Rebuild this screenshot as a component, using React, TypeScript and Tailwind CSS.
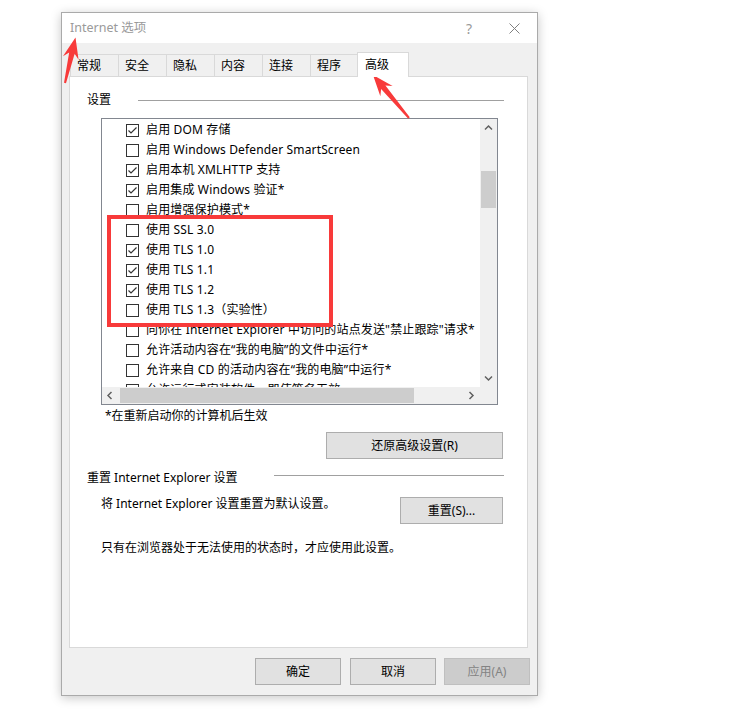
import React from 'react'

const rows: [boolean, string][] = [
  [true, '启用 DOM 存储'],
  [false, '启用 Windows Defender SmartScreen'],
  [true, '启用本机 XMLHTTP 支持'],
  [true, '启用集成 Windows 验证*'],
  [false, '启用增强保护模式*'],
  [false, '使用 SSL 3.0'],
  [true, '使用 TLS 1.0'],
  [true, '使用 TLS 1.1'],
  [true, '使用 TLS 1.2'],
  [false, '使用 TLS 1.3（实验性）'],
  [false, '向你在 Internet Explorer 中访问的站点发送"禁止跟踪"请求*'],
  [false, '允许活动内容在“我的电脑”的文件中运行*'],
  [false, '允许来自 CD 的活动内容在“我的电脑”中运行*'],
  [false, '允许运行或安装软件，即使签名无效'],
]

const tabs = ['常规', '安全', '隐私', '内容', '连接', '程序']

function CheckBox({ on }: { on: boolean }) {
  return (
    <span className="w-[13px] h-[13px] shrink-0 border border-[#333333] bg-white flex items-center justify-center">
      {on && (
        <svg width="11" height="11" viewBox="0 0 11 11">
          <path d="M1.5 5.5 L4 8 L9.5 2.5" fill="none" stroke="#333333" strokeWidth="1.2" />
        </svg>
      )}
    </span>
  )
}

function Chevron({ dir }: { dir: 'up' | 'down' | 'left' | 'right' }) {
  const d = {
    up: 'M1 5.5 L4.5 2 L8 5.5',
    down: 'M1 2.5 L4.5 6 L8 2.5',
    left: 'M5.5 1 L2 4.5 L5.5 8',
    right: 'M2.5 1 L6 4.5 L2.5 8',
  }[dir]
  return (
    <svg width="9" height="9" viewBox="0 0 9 9">
      <path d={d} fill="none" stroke="#606060" strokeWidth="1.5" />
    </svg>
  )
}

function Button({ label, className, disabled }: { label: string; className?: string; disabled?: boolean }) {
  return (
    <div
      className={
        'h-[27px] flex items-center justify-center border ' +
        (disabled ? 'bg-[#cccccc] border-[#bfbfbf] text-[#838383] ' : 'bg-[#e1e1e1] border-[#adadad] ') +
        (className ?? '')
      }
    >
      {label}
    </div>
  )
}

// tapered annotation arrow, tail -> tip
function arrowPoints(tx: number, ty: number, hx: number, hy: number) {
  const headLen = 21
  const headW = 8
  const neckW = 2.8
  const tailW = 1
  const dx = hx - tx
  const dy = hy - ty
  const len = Math.hypot(dx, dy)
  const ux = dx / len
  const uy = dy / len
  const px = -uy
  const py = ux
  const bx = hx - ux * headLen
  const by = hy - uy * headLen
  const nx = hx - ux * (headLen - 5)
  const ny = hy - uy * (headLen - 5)
  const pts = [
    [tx + px * tailW, ty + py * tailW],
    [nx + px * neckW, ny + py * neckW],
    [bx + px * headW, by + py * headW],
    [hx, hy],
    [bx - px * headW, by - py * headW],
    [nx - px * neckW, ny - py * neckW],
    [tx - px * tailW, ty - py * tailW],
  ]
  return pts.map((p) => p.join(',')).join(' ')
}

export default function App() {
  return (
    <div className="relative w-[744px] h-[728px] overflow-hidden bg-white pt-[12px] pl-[61px] text-[12px] text-black font-['Noto_Sans','Noto_Sans_CJK_SC',sans-serif]">
      {/* dialog window */}
      <div className="w-[477px] h-[684px] border border-[#aaaaaa] bg-[#f0f0f0] shadow-[0_2px_10px_rgba(0,0,0,0.22)] flex flex-col">
        {/* title bar */}
        <div className="h-[30px] bg-white flex items-center pl-[8px]">
          <span className="flex-1 text-[#9a9a9a] text-[12.5px]">Internet 选项</span>
          <span className="w-[46px] flex justify-center text-[#9a9a9a] text-[14px]">?</span>
          <span className="w-[45px] flex justify-center">
            <svg width="11" height="11" viewBox="0 0 11 11">
              <path d="M0.5 0.5 L10.5 10.5 M10.5 0.5 L0.5 10.5" stroke="#808080" strokeWidth="1" />
            </svg>
          </span>
        </div>

        <div className="flex-1 flex flex-col pt-[9px]">
          {/* tabs */}
          <div className="flex items-end ml-[8px]">
            {tabs.map((t) => (
              <div
                key={t}
                className="w-[48px] h-[22px] border-t border-l border-[#d9d9d9] bg-[#f0f0f0] flex items-center pl-[6px]"
              >
                {t}
              </div>
            ))}
            <div className="relative z-10 -ml-px -mb-px w-[52px] h-[25px] border-t border-l border-r border-[#d9d9d9] bg-white flex items-center pl-[7px]">
              高级
            </div>
          </div>

          {/* tab panel */}
          <div className="ml-[7px] w-[459px] h-[572px] border border-[#d9d9d9] bg-white flex flex-col">
            <div className="mt-[15px] h-[16px] flex items-center pl-[17px]">
              <span>设置</span>
              <span className="ml-auto mr-[23px] w-[366px] h-px bg-[#a0a0a0]" />
            </div>

            {/* settings list */}
            <div className="mt-[10px] ml-[31px] w-[397px] h-[287px] border border-[#828790] flex flex-col">
              <div className="flex h-[268px]">
                <div className="w-[378px] h-[268px] overflow-hidden pt-px">
                  {rows.map(([on, label], i) => (
                    <div key={i} className="h-[20px] flex items-center whitespace-nowrap pl-[24px]">
                      <CheckBox on={on} />
                      <span className="ml-[7px] tracking-[0.15px]">{label}</span>
                    </div>
                  ))}
                </div>
                <div className="w-[17px] bg-[#f0f0f0] flex flex-col">
                  <div className="h-[17px] flex items-center justify-center pt-[2px]">
                    <Chevron dir="up" />
                  </div>
                  <div className="flex-1">
                    <div className="mt-[35px] mx-px h-[37px] bg-[#cdcdcd]" />
                  </div>
                  <div className="h-[17px] flex items-center justify-center">
                    <Chevron dir="down" />
                  </div>
                </div>
              </div>
              <div className="flex h-[17px]">
                <div className="w-[378px] bg-[#f0f0f0] flex items-center">
                  <div className="w-[17px] h-[17px] flex items-center justify-center">
                    <Chevron dir="left" />
                  </div>
                  <div className="ml-px w-[294px] h-[15px] bg-[#cdcdcd]" />
                  <div className="ml-auto w-[17px] h-[17px] flex items-center justify-center">
                    <Chevron dir="right" />
                  </div>
                </div>
                <div className="w-[17px] bg-[#f0f0f0]" />
              </div>
            </div>

            <div className="mt-[3px] ml-[35px] leading-[16px]">*在重新启动你的计算机后生效</div>

            <Button label="还原高级设置(R)" className="mt-[8px] ml-[256px] w-[177px]" />

            <div className="mt-[11px] h-[16px] flex items-center pl-[17px]">
              <span>重置 Internet Explorer 设置</span>
              <span className="ml-auto mr-[23px] w-[230px] h-px bg-[#a0a0a0] self-start mt-[5px]" />
            </div>

            <div className="mt-[10px] h-[28px] flex items-start">
              <span className="pl-[31px] leading-[16px]">将 Internet Explorer 设置重置为默认设置。</span>
              <Button label="重置(S)..." className="ml-auto mr-[24px] mt-px w-[103px]" />
            </div>

            <div className="mt-[16px] pl-[31px] leading-[16px]">只有在浏览器处于无法使用的状态时，才应使用此设置。</div>
          </div>

          {/* dialog buttons */}
          <div className="mt-[10px] ml-[193px] flex">
            <Button label="确定" className="w-[86px]" />
            <Button label="取消" className="ml-[9px] w-[86px]" />
            <Button label="应用(A)" className="ml-[8px] w-[86px]" disabled />
          </div>
        </div>
      </div>

      {/* red annotations */}
      <svg className="absolute inset-0 pointer-events-none" width="744" height="728" viewBox="0 0 744 728">
        <rect x="109" y="217" width="222" height="108" fill="none" stroke="#f83a3a" strokeWidth="4" />
        <polygon points={arrowPoints(65, 83, 75.5, 37.5)} fill="#f83a3a" />
        <polygon points={arrowPoints(409, 118, 373, 75)} fill="#f83a3a" />
      </svg>
    </div>
  )
}
